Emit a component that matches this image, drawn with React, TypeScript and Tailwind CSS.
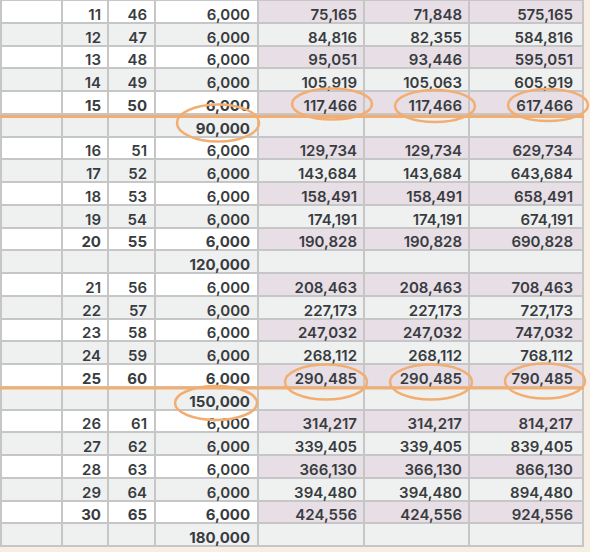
const rows: (string[] | string)[] = [
  ["11", "46", "6,000", "75,165", "71,848", "575,165"],
  ["12", "47", "6,000", "84,816", "82,355", "584,816"],
  ["13", "48", "6,000", "95,051", "93,446", "595,051"],
  ["14", "49", "6,000", "105,919", "105,063", "605,919"],
  ["15", "50", "6,000", "117,466", "117,466", "617,466"],
  "90,000",
  ["16", "51", "6,000", "129,734", "129,734", "629,734"],
  ["17", "52", "6,000", "143,684", "143,684", "643,684"],
  ["18", "53", "6,000", "158,491", "158,491", "658,491"],
  ["19", "54", "6,000", "174,191", "174,191", "674,191"],
  ["20", "55", "6,000", "190,828", "190,828", "690,828"],
  "120,000",
  ["21", "56", "6,000", "208,463", "208,463", "708,463"],
  ["22", "57", "6,000", "227,173", "227,173", "727,173"],
  ["23", "58", "6,000", "247,032", "247,032", "747,032"],
  ["24", "59", "6,000", "268,112", "268,112", "768,112"],
  ["25", "60", "6,000", "290,485", "290,485", "790,485"],
  "150,000",
  ["26", "61", "6,000", "314,217", "314,217", "814,217"],
  ["27", "62", "6,000", "339,405", "339,405", "839,405"],
  ["28", "63", "6,000", "366,130", "366,130", "866,130"],
  ["29", "64", "6,000", "394,480", "394,480", "894,480"],
  ["30", "65", "6,000", "424,556", "424,556", "924,556"],
  "180,000",
];

const pads = ["pr-[6px]", "pr-[7px]", "pr-[7px]", "pr-[6px]", "pr-[6px]", "pr-[9px]"];

function Cell({ text, bg, pad, bold }: { text?: string; bg: string; pad?: string; bold?: boolean }) {
  return (
    <div
      className={`flex items-center justify-end pt-[6px] text-[15px] leading-none text-[#383c40] ${bg} ${pad ?? ""} ${
        bold ? "font-bold" : "font-semibold"
      }`}
    >
      {text}
    </div>
  );
}

export default function App() {
  let n = 0;
  return (
    <div className="relative h-[552px] w-[590px] overflow-hidden bg-[#f7eee4] font-['Inter',sans-serif]">
      <div className="grid h-[547px] w-[584px] grid-cols-[59px_44px_45px_101px_104px_103px_112px] grid-rows-[repeat(24,minmax(0,1fr))] gap-[2px] bg-[#c6c6c6] px-[2px] pt-[1px] pb-[2px]">
        {rows.map((r, i) => {
          if (typeof r === "string") {
            n = 0;
            return [0, 1, 2, 3, 4, 5, 6].map((c) => (
              <Cell key={`${i}-${c}`} bg="bg-[#eff1f0]" text={c === 3 ? r : undefined} pad="pr-[7px]" bold />
            ));
          }
          const odd = n % 2 === 0;
          const bold = n === 4;
          n++;
          return [
            <Cell key={`${i}-x`} bg={odd ? "bg-white" : "bg-[#eff1f0]"} />,
            ...r.map((t, c) => (
              <Cell
                key={`${i}-${c}`}
                text={t}
                pad={pads[c]}
                bold={bold && c < 3}
                bg={odd ? (c < 3 ? "bg-white" : "bg-[#e7dee6]") : "bg-[#eff1f0]"}
              />
            )),
          ];
        })}
      </div>

      {/* hand-drawn highlight marks */}
      <svg className="pointer-events-none absolute inset-0" width="590" height="552" fill="none" stroke="#f2ae72" strokeWidth="2.5">
        <line x1="0" y1="116.5" x2="584" y2="116.5" strokeWidth="3" />
        <ellipse cx="218" cy="123" rx="41" ry="18.5" />
        <ellipse cx="332" cy="104" rx="40" ry="15.5" />
        <ellipse cx="435" cy="106" rx="40" ry="16" />
        <ellipse cx="548" cy="105" rx="40" ry="16" />
        <line x1="0" y1="388" x2="584" y2="388" strokeWidth="3" />
        <ellipse cx="216" cy="403" rx="41" ry="17" />
        <ellipse cx="326" cy="382" rx="41" ry="17.5" />
        <ellipse cx="431" cy="382" rx="41" ry="17.5" />
        <ellipse cx="545" cy="381" rx="40" ry="17.5" />
      </svg>
    </div>
  );
}
